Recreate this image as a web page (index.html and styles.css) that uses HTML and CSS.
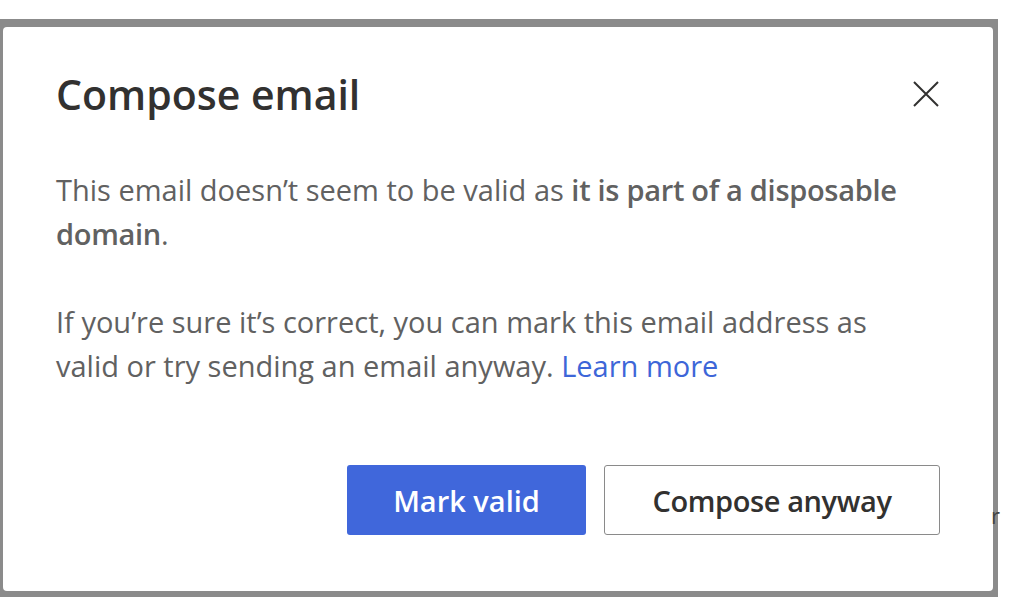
FILE: index.html
```html
<!DOCTYPE html>
<html lang="en">
<head>
<meta charset="utf-8">
<title>Compose email</title>
<link rel="stylesheet" href="styles.css">
</head>
<body>
<div class="stage">
  <div class="frame">
    <div class="card">
      <div class="header">
        <h1 class="title">Compose email</h1>
        <button class="close" aria-label="Close">
          <svg width="26" height="26" viewBox="0 0 26 26"><path d="M1 1 L25 25 M25 1 L1 25" stroke="#323130" stroke-width="2" fill="none"/></svg>
        </button>
      </div>
      <p class="text">This email doesn’t seem to be valid as <b>it is part of a disposable</b> <b>domain</b>.</p>
      <p class="text">If you’re sure it’s correct, you can mark this email address as valid or try sending an email anyway. <a class="link" href="#">Learn more</a></p>
      <div class="actions">
        <button class="btn btn-primary">Mark valid</button>
        <button class="btn btn-secondary">Compose anyway</button>
      </div>
    </div>
  </div>
  <span class="peek">r</span>
</div>
</body>
</html>
```
FILE: styles.css
```css
html, body {
  margin: 0;
  padding: 0;
  background: #ffffff;
}
body {
  font-family: "Open Sans", "Noto Sans", sans-serif;
  width: 1024px;
  height: 613px;
  overflow: hidden;
}
.stage {
  position: relative;
  padding-top: 19px;
  width: 998px;
}
.frame {
  background: #8b8b8b;
  padding: 8px 5px 6px 3px;
}
.card {
  background: #ffffff;
  border-radius: 4px;
  height: 564px;
  box-sizing: border-box;
  padding: 41px 53px 56px 53px;
  display: flex;
  flex-direction: column;
}
.header {
  display: flex;
  align-items: center;
  justify-content: space-between;
  height: 52px;
  margin-bottom: 48px;
}
.title {
  margin: 0;
  font-size: 41px;
  line-height: 52px;
  font-weight: 600;
  color: #323130;
}
.close {
  border: 0;
  background: none;
  padding: 0;
  width: 26px;
  height: 26px;
  margin-right: 1px;
  display: flex;
}
.text {
  margin: 0 0 44px 0;
  max-width: 860px;
  font-size: 29px;
  line-height: 44px;
  color: #616161;
}
.text b {
  font-weight: 600;
  letter-spacing: -0.3px;
  color: #616161;
}
.text:last-of-type {
  margin-bottom: 0;
}
.link {
  color: #3d66d8;
  text-decoration: none;
}
.actions {
  margin-top: auto;
  display: flex;
  justify-content: flex-end;
  gap: 18px;
}
.btn {
  height: 70px;
  border-radius: 3px;
  font-family: inherit;
  font-size: 29px;
  font-weight: 600;
  box-sizing: border-box;
  cursor: pointer;
}
.btn-primary {
  width: 239px;
  background: #4067db;
  border: 0;
  color: #ffffff;
}
.btn-secondary {
  width: 336px;
  background: #ffffff;
  border: 1.5px solid #8a8a8a;
  color: #323130;
  letter-spacing: -0.4px;
}
.peek {
  position: absolute;
  left: 991px;
  top: 500px;
  font-size: 22px;
  color: #444;
}
```
